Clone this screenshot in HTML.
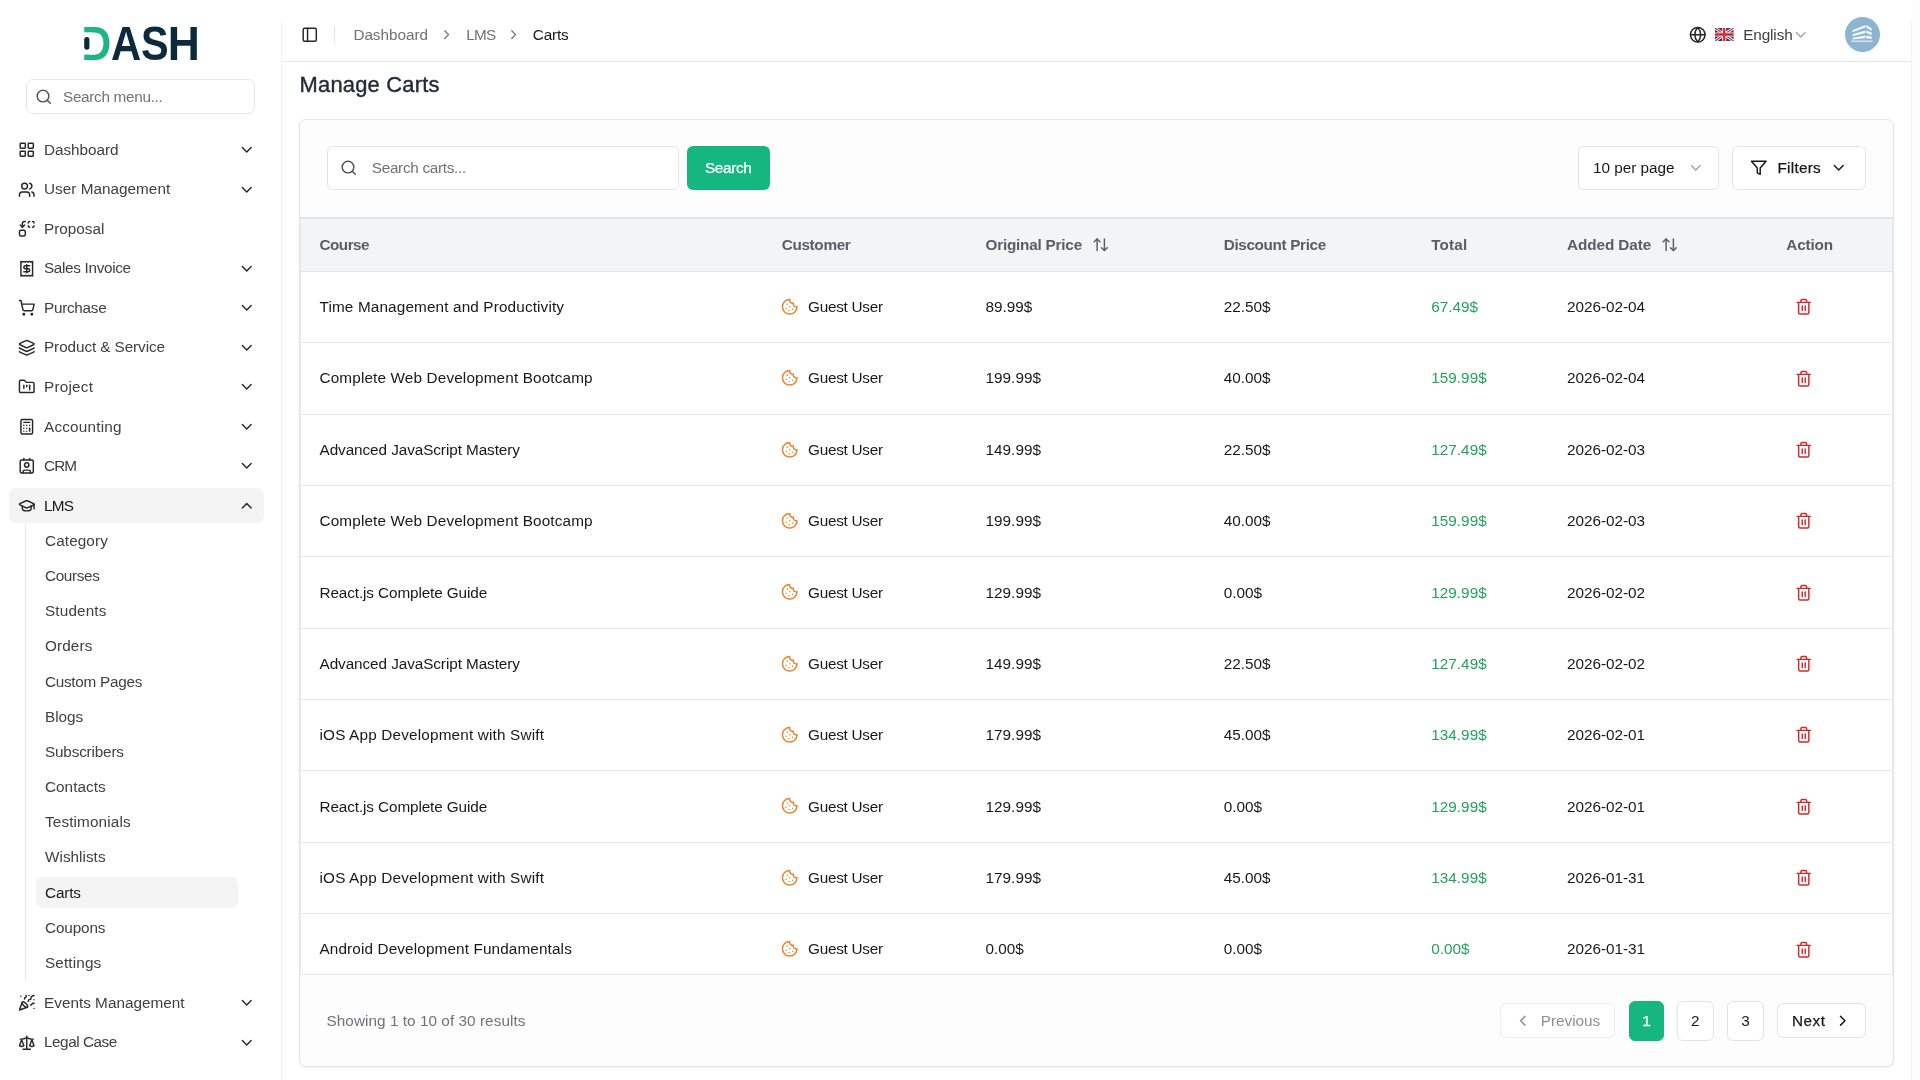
<!DOCTYPE html>
<html lang="en">
<head>
<meta charset="utf-8">
<title>Manage Carts</title>
<style>
*{box-sizing:border-box;margin:0;padding:0}
html,body{width:1920px;height:1080px;overflow:hidden}
body{font-family:"Liberation Sans",sans-serif;font-size:15.3px;color:#1f2937;background:#fdfdfd;position:relative}
svg.i{fill:none;stroke:currentColor;stroke-width:2;stroke-linecap:round;stroke-linejoin:round;display:block}
/* ---------- sidebar ---------- */
#side{position:absolute;left:0;top:0;width:281px;height:1080px;background:#fff;will-change:transform}
#logo{position:absolute;left:80px;top:20px;width:124px;height:46px}
#msearch{position:absolute;left:26px;top:79px;width:229px;height:35px;border:1px solid #e5e5e7;border-radius:7px;background:#fff}
#msearch svg{position:absolute;left:8px;top:8px;width:17.5px;height:17.5px;color:#52525b}
#msearch span{position:absolute;left:36px;top:7px;font-size:15.3px;line-height:19px;color:#71717a;white-space:nowrap}
.mi{position:absolute;left:9px;width:255px;height:35px;border-radius:7px;color:#404042}
.mi svg.ic{position:absolute;left:9.2px;top:8.75px;width:17.5px;height:17.5px;color:#27272a}
.mi .t{position:absolute;left:35px;top:8.6px;font-size:15.3px;white-space:nowrap;line-height:19px}
.mi svg.ch{position:absolute;left:229.1px;top:8.75px;width:17.5px;height:17.5px;color:#27272a}
.mi.act{background:#f4f4f5;color:#18181b}
#subline{position:absolute;left:25px;top:523px;width:1px;height:457px;background:#e5e7eb}
.si{position:absolute;left:36px;width:202px;height:30.6px;border-radius:7px;color:#404042}
.si span{position:absolute;left:9px;top:6.2px;font-size:15.3px;white-space:nowrap;line-height:19px}
.si.act{background:#f4f4f5;color:#18181b}
/* ---------- main ---------- */
#main{position:absolute;left:281px;top:0;width:1631px;height:1100px;background:#fff;will-change:transform;border-left:1px solid transparent;border-right:1px solid transparent}
#main:before,#main:after{content:"";position:absolute;top:20px;width:1px;height:1080px;background:#f3f3f4}
#main:before{left:-1px}
#main:after{right:-1px}
#hdr{position:absolute;left:0;top:0;width:100%;height:62px;border-bottom:1px solid #e7e7e9}
#hdr .tx{line-height:20px}

.abs{position:absolute;white-space:nowrap}
.tx{position:absolute;white-space:nowrap;font-size:15.3px;line-height:20px}
#title{position:absolute;white-space:nowrap;font-size:21.9px;line-height:30px;color:#1f2937;-webkit-text-stroke:.4px #1f2937}
#card{position:absolute;border:1px solid #e4e4e7;border-radius:7px;background:#fdfdfd;box-shadow:0 1px 2px rgba(0,0,0,.06);overflow:hidden}
.box{position:absolute;border:1px solid #e4e4e7;border-radius:5.5px;background:#fff}
#thead{position:absolute;left:0;width:100%;background:#f3f4f6;box-shadow:inset 1px 0 0 #e9eaec,inset -1px 0 0 #e9eaec;border-top:2px solid #e2e3e6;border-bottom:1px solid #e5e7eb}
#thead .tx{font-weight:bold;color:#585d69}
#thead svg{color:#585d69}
#rows{position:absolute;left:0;width:100%;overflow:hidden;background:#fff;border-bottom:1px solid #e5e7eb}
#rows:after{content:"";position:absolute;left:0;top:0;right:0;bottom:0;box-shadow:inset 1px 0 0 #ececee,inset -1px 0 0 #ececee;pointer-events:none}
.r{position:absolute;left:0;width:100%;border-bottom:1px solid #e6e7ea}
.r .tx{color:#18181b}
.r .tx.g{color:#21a35b}
.pg{position:absolute;border:1px solid #e4e4e7;border-radius:6px;background:#fff}

</style>
</head>
<body>
<div id="side">
  <svg id="logo" viewBox="0 0 124 46">
    <g font-family="Liberation Sans, sans-serif" font-weight="bold" font-size="48.3">
      <text x="1.6" y="39.9" textLength="29.7" lengthAdjust="spacingAndGlyphs" fill="#1db584">D</text>
      <text x="31.05" y="39.9" textLength="30.2" lengthAdjust="spacingAndGlyphs" fill="#0b2a3b">A</text>
      <text x="61" y="39.9" textLength="27.7" lengthAdjust="spacingAndGlyphs" fill="#0b2a3b">S</text>
      <text x="87.7" y="39.9" textLength="32.1" lengthAdjust="spacingAndGlyphs" fill="#0b2a3b">H</text>
    </g>
    <rect x="2" y="12.3" width="9.6" height="22.3" fill="#fff"/>
    <rect x="4.2" y="16.9" width="5.2" height="12.8" rx="2.6" fill="#0b2a3b"/>
  </svg>
  <div id="msearch">
    <svg class="i" viewBox="0 0 24 24"><circle cx="11" cy="11" r="8"/><path d="m21 21-4.3-4.3"/></svg>
    <span style="letter-spacing:-0.302px">Search menu...</span>
  </div>
  <div class="mi" style="top:132.30px"><svg class="i ic" viewBox="0 0 24 24" ><rect width="7" height="7" x="3" y="3" rx="1"/><rect width="7" height="7" x="14" y="3" rx="1"/><rect width="7" height="7" x="14" y="14" rx="1"/><rect width="7" height="7" x="3" y="14" rx="1"/></svg><span class="t" style="top:7.70px;letter-spacing:-0.035px">Dashboard</span><svg class="i ch" viewBox="0 0 24 24" ><path d="m6 9 6 6 6-6"/></svg></div>
  <div class="mi" style="top:171.80px"><svg class="i ic" viewBox="0 0 24 24" ><path d="M16 21v-2a4 4 0 0 0-4-4H6a4 4 0 0 0-4 4v2"/><circle cx="9" cy="7" r="4"/><path d="M22 21v-2a4 4 0 0 0-3-3.87"/><path d="M16 3.13a4 4 0 0 1 0 7.75"/></svg><span class="t" style="top:7.20px;letter-spacing:0.025px">User Management</span><svg class="i ch" viewBox="0 0 24 24" ><path d="m6 9 6 6 6-6"/></svg></div>
  <div class="mi" style="top:211.30px"><svg class="i ic" viewBox="0 0 24 24" ><path d="M14 4a2 2 0 0 1 2-2"/><path d="M16 10a2 2 0 0 1-2-2"/><path d="M20 2a2 2 0 0 1 2 2"/><path d="M22 8a2 2 0 0 1-2 2"/><path d="m3 7 3 3 3-3"/><path d="M6 10V5a3 3 0 0 1 3-3h1"/><rect x="2" y="14" width="8" height="8" rx="2"/></svg><span class="t" style="top:7.70px;letter-spacing:-0.01px">Proposal</span></div>
  <div class="mi" style="top:250.80px"><svg class="i ic" viewBox="0 0 24 24" ><path d="M4 2v20l2-1 2 1 2-1 2 1 2-1 2 1 2-1 2 1V2l-2 1-2-1-2 1-2-1-2 1-2-1-2 1Z"/><path d="M16 8h-6a2 2 0 1 0 0 4h4a2 2 0 1 1 0 4H8"/><path d="M12 17.5v-11"/></svg><span class="t" style="top:7.20px;letter-spacing:-0.328px">Sales Invoice</span><svg class="i ch" viewBox="0 0 24 24" ><path d="m6 9 6 6 6-6"/></svg></div>
  <div class="mi" style="top:290.30px"><svg class="i ic" viewBox="0 0 24 24" ><circle cx="8" cy="21" r="1"/><circle cx="19" cy="21" r="1"/><path d="M2.05 2.05h2l2.66 12.42a2 2 0 0 0 2 1.58h9.78a2 2 0 0 0 1.95-1.57l1.65-7.43H5.12"/></svg><span class="t" style="top:7.70px;letter-spacing:-0.27px">Purchase</span><svg class="i ch" viewBox="0 0 24 24" ><path d="m6 9 6 6 6-6"/></svg></div>
  <div class="mi" style="top:329.80px"><svg class="i ic" viewBox="0 0 24 24" ><path d="M12.83 2.18a2 2 0 0 0-1.66 0L2.6 6.08a1 1 0 0 0 0 1.83l8.58 3.91a2 2 0 0 0 1.66 0l8.58-3.9a1 1 0 0 0 0-1.83z"/><path d="M2 12a1 1 0 0 0 .58.91l8.6 3.91a2 2 0 0 0 1.65 0l8.58-3.9A1 1 0 0 0 22 12"/><path d="M2 17a1 1 0 0 0 .58.91l8.6 3.91a2 2 0 0 0 1.65 0l8.58-3.9A1 1 0 0 0 22 17"/></svg><span class="t" style="top:7.20px;letter-spacing:-0.085px">Product &amp; Service</span><svg class="i ch" viewBox="0 0 24 24" ><path d="m6 9 6 6 6-6"/></svg></div>
  <div class="mi" style="top:369.30px"><svg class="i ic" viewBox="0 0 24 24" ><path d="M4 20h16a2 2 0 0 0 2-2V8a2 2 0 0 0-2-2h-7.93a2 2 0 0 1-1.66-.9l-.82-1.2A2 2 0 0 0 7.93 3H4a2 2 0 0 0-2 2v13c0 1.1.9 2 2 2Z"/><path d="M8 10v4"/><path d="M12 10v2"/><path d="M16 10v6"/></svg><span class="t" style="top:7.70px;letter-spacing:0.223px">Project</span><svg class="i ch" viewBox="0 0 24 24" ><path d="m6 9 6 6 6-6"/></svg></div>
  <div class="mi" style="top:408.80px"><svg class="i ic" viewBox="0 0 24 24" ><rect width="16" height="20" x="4" y="2" rx="2"/><line x1="8" x2="16" y1="6" y2="6"/><line x1="16" x2="16" y1="14" y2="18"/><path d="M16 10h.01"/><path d="M12 10h.01"/><path d="M8 10h.01"/><path d="M12 14h.01"/><path d="M8 14h.01"/><path d="M12 18h.01"/><path d="M8 18h.01"/></svg><span class="t" style="top:8.20px;letter-spacing:0.206px">Accounting</span><svg class="i ch" viewBox="0 0 24 24" ><path d="m6 9 6 6 6-6"/></svg></div>
  <div class="mi" style="top:448.30px"><svg class="i ic" viewBox="0 0 24 24" ><path d="M16 2v2"/><path d="M7 22v-2a2 2 0 0 1 2-2h6a2 2 0 0 1 2 2v2"/><path d="M8 2v2"/><circle cx="12" cy="11" r="3"/><rect x="3" y="4" width="18" height="18" rx="2"/></svg><span class="t" style="top:7.70px;letter-spacing:-0.875px">CRM</span><svg class="i ch" viewBox="0 0 24 24" ><path d="m6 9 6 6 6-6"/></svg></div>
  <div class="mi act" style="top:487.80px"><svg class="i ic" viewBox="0 0 24 24" ><path d="M21.42 10.922a1 1 0 0 0-.019-1.838L12.83 5.18a2 2 0 0 0-1.66 0L2.6 9.08a1 1 0 0 0 0 1.832l8.57 3.908a2 2 0 0 0 1.66 0z"/><path d="M22 10v6"/><path d="M6 12.5V16a6 3 0 0 0 12 0v-3.5"/></svg><span class="t" style="top:8.20px;letter-spacing:-0.781px">LMS</span><svg class="i ch" viewBox="0 0 24 24" ><path d="m18 15-6-6-6 6"/></svg></div>
  <div class="mi" style="top:985.10px"><svg class="i ic" viewBox="0 0 24 24" ><path d="M5.8 11.3 2 22l10.7-3.79"/><path d="M4 3h.01"/><path d="M22 8h.01"/><path d="M15 2h.01"/><path d="M22 20h.01"/><path d="m22 2-2.24.75a2.9 2.9 0 0 0-1.96 3.12c.1.86-.57 1.63-1.45 1.63h-.38c-.86 0-1.6.6-1.76 1.44L14 10"/><path d="m22 13-.82-.33c-.86-.34-1.82.2-1.98 1.11c-.11.7-.72 1.22-1.43 1.22H17"/><path d="m11 2 .33.82c.34.86-.2 1.82-1.11 1.98C9.52 4.9 9 5.52 9 6.23V7"/><path d="M11 13c1.93 1.93 2.83 4.17 2 5-.83.83-3.07-.07-5-2-1.93-1.93-2.83-4.17-2-5 .83-.83 3.07.07 5 2Z"/></svg><span class="t" style="top:7.90px;letter-spacing:0.015px">Events Management</span><svg class="i ch" viewBox="0 0 24 24" ><path d="m6 9 6 6 6-6"/></svg></div>
  <div class="mi" style="top:1025.40px"><svg class="i ic" viewBox="0 0 24 24" ><path d="m16 16 3-8 3 8c-.87.65-1.92 1-3 1s-2.13-.35-3-1Z"/><path d="m2 16 3-8 3 8c-.87.65-1.92 1-3 1s-2.13-.35-3-1Z"/><path d="M7 21h10"/><path d="M12 3v18"/><path d="M3 7h2c2 0 5-1 7-2 2 1 5 2 7 2h2"/></svg><span class="t" style="top:6.60px;letter-spacing:-0.464px">Legal Case</span><svg class="i ch" viewBox="0 0 24 24" ><path d="m6 9 6 6 6-6"/></svg></div>
  <div id="subline"></div>
  <div class="si" style="top:525.60px"><span style="top:5.40px;letter-spacing:0.107px">Category</span></div>
  <div class="si" style="top:560.76px"><span style="top:5.24px;letter-spacing:-0.342px">Courses</span></div>
  <div class="si" style="top:595.92px"><span style="top:5.08px;letter-spacing:0.145px">Students</span></div>
  <div class="si" style="top:631.08px"><span style="top:4.92px;letter-spacing:0.122px">Orders</span></div>
  <div class="si" style="top:666.24px"><span style="top:5.76px;letter-spacing:-0.277px">Custom Pages</span></div>
  <div class="si" style="top:701.40px"><span style="top:5.60px;letter-spacing:-0.031px">Blogs</span></div>
  <div class="si" style="top:736.56px"><span style="top:5.44px;letter-spacing:-0.179px">Subscribers</span></div>
  <div class="si" style="top:771.72px"><span style="top:5.28px;letter-spacing:0.035px">Contacts</span></div>
  <div class="si" style="top:806.88px"><span style="top:5.12px;letter-spacing:0.128px">Testimonials</span></div>
  <div class="si" style="top:842.04px"><span style="top:4.96px;letter-spacing:0.024px">Wishlists</span></div>
  <div class="si act" style="top:877.20px"><span style="top:5.80px;letter-spacing:-0.169px">Carts</span></div>
  <div class="si" style="top:912.36px"><span style="top:5.64px;letter-spacing:-0.129px">Coupons</span></div>
  <div class="si" style="top:947.52px"><span style="top:5.48px;letter-spacing:0.137px">Settings</span></div>
</div>
<div id="main">
  <div id="hdr"><svg class="i abs" viewBox="0 0 24 24" style="left:18.95px;top:25.95px;width:17.5px;height:17.5px;color:#27272a;stroke-width:2;"><rect width="18" height="18" x="3" y="3" rx="2"/><path d="M9 3v18"/></svg><div class="abs" style="left:52px;top:26px;width:1px;height:17px;background:#e4e4e7"></div><span class="tx" style="left:71.40px;top:25.00px;letter-spacing:-0.035px;color:#71717a">Dashboard</span><svg class="i abs" viewBox="0 0 24 24" style="left:156.95px;top:27.25px;width:15.3px;height:15.3px;color:#71717a;stroke-width:2;"><path d="m9 18 6-6-6-6"/></svg><span class="tx" style="left:184.30px;top:25.00px;letter-spacing:-0.781px;color:#71717a">LMS</span><svg class="i abs" viewBox="0 0 24 24" style="left:224.05px;top:27.25px;width:15.3px;height:15.3px;color:#71717a;stroke-width:2;"><path d="m9 18 6-6-6-6"/></svg><span class="tx" style="left:250.80px;top:25.00px;letter-spacing:-0.169px;color:#18181b">Carts</span><svg class="i abs" viewBox="0 0 24 24" style="left:1407.05px;top:25.80px;width:17.5px;height:17.5px;color:#27272a;stroke-width:2;"><circle cx="12" cy="12" r="10"/><path d="M12 2a14.5 14.5 0 0 0 0 20 14.5 14.5 0 0 0 0-20"/><path d="M2 12h20"/></svg><svg class="abs" viewBox="0 0 60 40" preserveAspectRatio="none" style="left:1433.3px;top:28px;width:18.5px;height:13px"><rect width="60" height="40" fill="#1f3a8a"/><path d="M0 0 60 40M60 0 0 40" stroke="#fff" stroke-width="9"/><path d="M0 0 60 40M60 0 0 40" stroke="#dc2626" stroke-width="3.5"/><path d="M30 0v40M0 20h60" stroke="#fff" stroke-width="13"/><path d="M30 0v40M0 20h60" stroke="#dc2626" stroke-width="7.5"/></svg><span class="tx" style="left:1461.30px;top:25.00px;letter-spacing:-0.136px;color:#3f3f46">English</span><svg class="i abs" viewBox="0 0 24 24" style="left:1510.15px;top:26.20px;width:17.5px;height:17.5px;color:#a1a1aa;stroke-width:1.8;"><path d="m6 9 6 6 6-6"/></svg><svg class="abs" viewBox="0 0 35 35" style="left:1563px;top:16.8px;width:35px;height:35px"><circle cx="17.5" cy="17.5" r="17.5" fill="#8db4d1"/><g fill="#f3f8fc"><path d="M7.5 13.2 20.3 8l0 2.6-12.8 4.6z"/><path d="M7.5 17.2 20.3 13.4l0 2.6-12.8 3.2z"/><path d="M7.5 20.8 20.3 18.6l0 2.6-12.8 1.4z"/><path d="M21.2 8 26.7 11.6v2.4L21.2 10.6z"/><path d="M21.2 13.4 26.7 15.6v2.4l-5.5-2z"/><path d="M21.2 18.6 26.7 19.6v2.4l-5.5-.8z"/><rect x="6.5" y="23.6" width="21.2" height="1.1"/></g></svg></div>
  <div id="title" style="left:17.60px;top:70.00px;letter-spacing:0.207px">Manage Carts</div>
  <div id="card" style="left:17px;top:119px;width:1594.5px;height:947.5px">
    <div class="box" style="left:27.20px;top:26.00px;width:351.80px;height:43.70px;"><svg class="i abs" viewBox="0 0 24 24" style="left:11.80px;top:12.35px;width:17.5px;height:17.5px;color:#52525b;stroke-width:2;"><circle cx="11" cy="11" r="8"/><path d="m21 21-4.3-4.3"/></svg><span class="tx" style="left:43.60px;top:11.00px;letter-spacing:-0.3px;color:#71717a">Search carts...</span></div>
    <div class="abs" style="left:387px;top:26px;width:83px;height:43.7px;border-radius:6px;background:#15b680"><span class="tx" style="left:18.00px;top:12.00px;letter-spacing:-0.357px;color:#fff;-webkit-text-stroke:0.25px #fff">Search</span></div>
    <div class="box" style="left:1278.00px;top:26.00px;width:140.50px;height:43.70px;"><span class="tx" style="left:14.00px;top:11.00px;letter-spacing:-0.013px;color:#18181b">10 per page</span><svg class="i abs" viewBox="0 0 24 24" style="left:108.00px;top:12.15px;width:17.5px;height:17.5px;color:#a1a1aa;stroke-width:1.8;"><path d="m6 9 6 6 6-6"/></svg></div>
    <div class="box" style="left:1432.30px;top:26.00px;width:133.40px;height:43.70px;"><svg class="i abs" viewBox="0 0 24 24" style="left:16.70px;top:11.85px;width:17.5px;height:17.5px;color:#18181b;stroke-width:2;"><polygon points="22 3 2 3 10 12.46 10 19 14 21 14 12.46 22 3"/></svg><span class="tx" style="left:44.20px;top:11.00px;letter-spacing:0.267px;color:#18181b;-webkit-text-stroke:0.25px #18181b">Filters</span><svg class="i abs" viewBox="0 0 24 24" style="left:96.70px;top:12.15px;width:17.5px;height:17.5px;color:#18181b;stroke-width:2;"><path d="m6 9 6 6 6-6"/></svg></div>
    <div id="thead" style="top:97px;height:55px"><span class="tx" style="left:19.50px;top:16.00px;letter-spacing:-0.533px">Course</span><span class="tx" style="left:481.70px;top:16.00px;letter-spacing:-0.329px">Customer</span><span class="tx" style="left:685.50px;top:16.00px;letter-spacing:-0.216px">Original Price</span><svg class="i abs" viewBox="0 0 24 24" style="left:792.15px;top:17.25px;width:17.5px;height:17.5px;color:#585d69;stroke-width:2;"><path d="m21 16-4 4-4-4"/><path d="M17 20V4"/><path d="m3 8 4-4 4 4"/><path d="M7 4v16"/></svg><span class="tx" style="left:923.70px;top:16.00px;letter-spacing:-0.352px">Discount Price</span><span class="tx" style="left:1131.20px;top:16.00px;letter-spacing:0.159px">Total</span><span class="tx" style="left:1267.00px;top:16.00px;letter-spacing:-0.083px">Added Date</span><svg class="i abs" viewBox="0 0 24 24" style="left:1360.85px;top:17.25px;width:17.5px;height:17.5px;color:#585d69;stroke-width:2;"><path d="m21 16-4 4-4-4"/><path d="M17 20V4"/><path d="m3 8 4-4 4 4"/><path d="M7 4v16"/></svg><span class="tx" style="left:1486.30px;top:16.00px;letter-spacing:-0.17px">Action</span></div>
    <div id="rows" style="top:152px;height:703px">
      <div class="r" style="top:0px;height:71px"><span class="tx" style="left:19.50px;top:25.00px;letter-spacing:0.143px">Time Management and Productivity</span><svg class="i abs" viewBox="0 0 24 24" style="left:481.15px;top:25.95px;width:17.5px;height:17.5px;color:#e8842a;stroke-width:2;"><path d="M12 2a10 10 0 1 0 10 10 4 4 0 0 1-5-5 4 4 0 0 1-5-5"/><path d="M8.5 8.5v.01"/><path d="M16 15.5v.01"/><path d="M12 12v.01"/><path d="M11 17v.01"/><path d="M7 14v.01"/></svg><span class="tx" style="left:508.00px;top:25.00px;letter-spacing:-0.255px">Guest User</span><span class="tx" style="left:685.50px;top:25.00px;letter-spacing:0.018px">89.99$</span><span class="tx" style="left:923.70px;top:25.00px;letter-spacing:0.018px">22.50$</span><span class="tx g" style="left:1131.20px;top:25.00px;letter-spacing:0.018px">67.49$</span><span class="tx" style="left:1267.00px;top:25.00px;letter-spacing:-0.037px">2026-02-04</span><svg class="i abs" viewBox="0 0 24 24" style="left:1495.15px;top:26.25px;width:17.5px;height:17.5px;color:#d02b2b;stroke-width:2;"><path d="M3 6h18"/><path d="M19 6v14c0 1-1 2-2 2H7c-1 0-2-1-2-2V6"/><path d="M8 6V4c0-1 1-2 2-2h4c1 0 2 1 2 2v2"/><line x1="10" x2="10" y1="11" y2="17"/><line x1="14" x2="14" y1="11" y2="17"/></svg></div>
      <div class="r" style="top:71px;height:72px"><span class="tx" style="left:19.50px;top:25.00px;letter-spacing:0.147px">Complete Web Development Bootcamp</span><svg class="i abs" viewBox="0 0 24 24" style="left:481.15px;top:26.45px;width:17.5px;height:17.5px;color:#e8842a;stroke-width:2;"><path d="M12 2a10 10 0 1 0 10 10 4 4 0 0 1-5-5 4 4 0 0 1-5-5"/><path d="M8.5 8.5v.01"/><path d="M16 15.5v.01"/><path d="M12 12v.01"/><path d="M11 17v.01"/><path d="M7 14v.01"/></svg><span class="tx" style="left:508.00px;top:25.00px;letter-spacing:-0.255px">Guest User</span><span class="tx" style="left:685.50px;top:25.00px;letter-spacing:0.033px">199.99$</span><span class="tx" style="left:923.70px;top:25.00px;letter-spacing:0.018px">40.00$</span><span class="tx g" style="left:1131.20px;top:25.00px;letter-spacing:0.033px">159.99$</span><span class="tx" style="left:1267.00px;top:25.00px;letter-spacing:-0.037px">2026-02-04</span><svg class="i abs" viewBox="0 0 24 24" style="left:1495.15px;top:26.75px;width:17.5px;height:17.5px;color:#d02b2b;stroke-width:2;"><path d="M3 6h18"/><path d="M19 6v14c0 1-1 2-2 2H7c-1 0-2-1-2-2V6"/><path d="M8 6V4c0-1 1-2 2-2h4c1 0 2 1 2 2v2"/><line x1="10" x2="10" y1="11" y2="17"/><line x1="14" x2="14" y1="11" y2="17"/></svg></div>
      <div class="r" style="top:143px;height:71px"><span class="tx" style="left:19.50px;top:25.00px;letter-spacing:-0.072px">Advanced JavaScript Mastery</span><svg class="i abs" viewBox="0 0 24 24" style="left:481.15px;top:25.95px;width:17.5px;height:17.5px;color:#e8842a;stroke-width:2;"><path d="M12 2a10 10 0 1 0 10 10 4 4 0 0 1-5-5 4 4 0 0 1-5-5"/><path d="M8.5 8.5v.01"/><path d="M16 15.5v.01"/><path d="M12 12v.01"/><path d="M11 17v.01"/><path d="M7 14v.01"/></svg><span class="tx" style="left:508.00px;top:25.00px;letter-spacing:-0.255px">Guest User</span><span class="tx" style="left:685.50px;top:25.00px;letter-spacing:0.033px">149.99$</span><span class="tx" style="left:923.70px;top:25.00px;letter-spacing:0.018px">22.50$</span><span class="tx g" style="left:1131.20px;top:25.00px;letter-spacing:0.033px">127.49$</span><span class="tx" style="left:1267.00px;top:25.00px;letter-spacing:-0.037px">2026-02-03</span><svg class="i abs" viewBox="0 0 24 24" style="left:1495.15px;top:26.25px;width:17.5px;height:17.5px;color:#d02b2b;stroke-width:2;"><path d="M3 6h18"/><path d="M19 6v14c0 1-1 2-2 2H7c-1 0-2-1-2-2V6"/><path d="M8 6V4c0-1 1-2 2-2h4c1 0 2 1 2 2v2"/><line x1="10" x2="10" y1="11" y2="17"/><line x1="14" x2="14" y1="11" y2="17"/></svg></div>
      <div class="r" style="top:214px;height:71px"><span class="tx" style="left:19.50px;top:25.00px;letter-spacing:0.147px">Complete Web Development Bootcamp</span><svg class="i abs" viewBox="0 0 24 24" style="left:481.15px;top:25.95px;width:17.5px;height:17.5px;color:#e8842a;stroke-width:2;"><path d="M12 2a10 10 0 1 0 10 10 4 4 0 0 1-5-5 4 4 0 0 1-5-5"/><path d="M8.5 8.5v.01"/><path d="M16 15.5v.01"/><path d="M12 12v.01"/><path d="M11 17v.01"/><path d="M7 14v.01"/></svg><span class="tx" style="left:508.00px;top:25.00px;letter-spacing:-0.255px">Guest User</span><span class="tx" style="left:685.50px;top:25.00px;letter-spacing:0.033px">199.99$</span><span class="tx" style="left:923.70px;top:25.00px;letter-spacing:0.018px">40.00$</span><span class="tx g" style="left:1131.20px;top:25.00px;letter-spacing:0.033px">159.99$</span><span class="tx" style="left:1267.00px;top:25.00px;letter-spacing:-0.037px">2026-02-03</span><svg class="i abs" viewBox="0 0 24 24" style="left:1495.15px;top:26.25px;width:17.5px;height:17.5px;color:#d02b2b;stroke-width:2;"><path d="M3 6h18"/><path d="M19 6v14c0 1-1 2-2 2H7c-1 0-2-1-2-2V6"/><path d="M8 6V4c0-1 1-2 2-2h4c1 0 2 1 2 2v2"/><line x1="10" x2="10" y1="11" y2="17"/><line x1="14" x2="14" y1="11" y2="17"/></svg></div>
      <div class="r" style="top:285px;height:72px"><span class="tx" style="left:19.50px;top:26.00px;letter-spacing:-0.107px">React.js Complete Guide</span><svg class="i abs" viewBox="0 0 24 24" style="left:481.15px;top:26.45px;width:17.5px;height:17.5px;color:#e8842a;stroke-width:2;"><path d="M12 2a10 10 0 1 0 10 10 4 4 0 0 1-5-5 4 4 0 0 1-5-5"/><path d="M8.5 8.5v.01"/><path d="M16 15.5v.01"/><path d="M12 12v.01"/><path d="M11 17v.01"/><path d="M7 14v.01"/></svg><span class="tx" style="left:508.00px;top:26.00px;letter-spacing:-0.255px">Guest User</span><span class="tx" style="left:685.50px;top:26.00px;letter-spacing:0.033px">129.99$</span><span class="tx" style="left:923.70px;top:26.00px;letter-spacing:0px">0.00$</span><span class="tx g" style="left:1131.20px;top:26.00px;letter-spacing:0.033px">129.99$</span><span class="tx" style="left:1267.00px;top:26.00px;letter-spacing:-0.037px">2026-02-02</span><svg class="i abs" viewBox="0 0 24 24" style="left:1495.15px;top:26.75px;width:17.5px;height:17.5px;color:#d02b2b;stroke-width:2;"><path d="M3 6h18"/><path d="M19 6v14c0 1-1 2-2 2H7c-1 0-2-1-2-2V6"/><path d="M8 6V4c0-1 1-2 2-2h4c1 0 2 1 2 2v2"/><line x1="10" x2="10" y1="11" y2="17"/><line x1="14" x2="14" y1="11" y2="17"/></svg></div>
      <div class="r" style="top:357px;height:71px"><span class="tx" style="left:19.50px;top:25.00px;letter-spacing:-0.072px">Advanced JavaScript Mastery</span><svg class="i abs" viewBox="0 0 24 24" style="left:481.15px;top:25.95px;width:17.5px;height:17.5px;color:#e8842a;stroke-width:2;"><path d="M12 2a10 10 0 1 0 10 10 4 4 0 0 1-5-5 4 4 0 0 1-5-5"/><path d="M8.5 8.5v.01"/><path d="M16 15.5v.01"/><path d="M12 12v.01"/><path d="M11 17v.01"/><path d="M7 14v.01"/></svg><span class="tx" style="left:508.00px;top:25.00px;letter-spacing:-0.255px">Guest User</span><span class="tx" style="left:685.50px;top:25.00px;letter-spacing:0.033px">149.99$</span><span class="tx" style="left:923.70px;top:25.00px;letter-spacing:0.018px">22.50$</span><span class="tx g" style="left:1131.20px;top:25.00px;letter-spacing:0.033px">127.49$</span><span class="tx" style="left:1267.00px;top:25.00px;letter-spacing:-0.037px">2026-02-02</span><svg class="i abs" viewBox="0 0 24 24" style="left:1495.15px;top:26.25px;width:17.5px;height:17.5px;color:#d02b2b;stroke-width:2;"><path d="M3 6h18"/><path d="M19 6v14c0 1-1 2-2 2H7c-1 0-2-1-2-2V6"/><path d="M8 6V4c0-1 1-2 2-2h4c1 0 2 1 2 2v2"/><line x1="10" x2="10" y1="11" y2="17"/><line x1="14" x2="14" y1="11" y2="17"/></svg></div>
      <div class="r" style="top:428px;height:71px"><span class="tx" style="left:19.50px;top:25.00px;letter-spacing:0.176px">iOS App Development with Swift</span><svg class="i abs" viewBox="0 0 24 24" style="left:481.15px;top:25.95px;width:17.5px;height:17.5px;color:#e8842a;stroke-width:2;"><path d="M12 2a10 10 0 1 0 10 10 4 4 0 0 1-5-5 4 4 0 0 1-5-5"/><path d="M8.5 8.5v.01"/><path d="M16 15.5v.01"/><path d="M12 12v.01"/><path d="M11 17v.01"/><path d="M7 14v.01"/></svg><span class="tx" style="left:508.00px;top:25.00px;letter-spacing:-0.255px">Guest User</span><span class="tx" style="left:685.50px;top:25.00px;letter-spacing:0.033px">179.99$</span><span class="tx" style="left:923.70px;top:25.00px;letter-spacing:0.018px">45.00$</span><span class="tx g" style="left:1131.20px;top:25.00px;letter-spacing:0.033px">134.99$</span><span class="tx" style="left:1267.00px;top:25.00px;letter-spacing:-0.037px">2026-02-01</span><svg class="i abs" viewBox="0 0 24 24" style="left:1495.15px;top:26.25px;width:17.5px;height:17.5px;color:#d02b2b;stroke-width:2;"><path d="M3 6h18"/><path d="M19 6v14c0 1-1 2-2 2H7c-1 0-2-1-2-2V6"/><path d="M8 6V4c0-1 1-2 2-2h4c1 0 2 1 2 2v2"/><line x1="10" x2="10" y1="11" y2="17"/><line x1="14" x2="14" y1="11" y2="17"/></svg></div>
      <div class="r" style="top:499px;height:72px"><span class="tx" style="left:19.50px;top:26.00px;letter-spacing:-0.107px">React.js Complete Guide</span><svg class="i abs" viewBox="0 0 24 24" style="left:481.15px;top:26.45px;width:17.5px;height:17.5px;color:#e8842a;stroke-width:2;"><path d="M12 2a10 10 0 1 0 10 10 4 4 0 0 1-5-5 4 4 0 0 1-5-5"/><path d="M8.5 8.5v.01"/><path d="M16 15.5v.01"/><path d="M12 12v.01"/><path d="M11 17v.01"/><path d="M7 14v.01"/></svg><span class="tx" style="left:508.00px;top:26.00px;letter-spacing:-0.255px">Guest User</span><span class="tx" style="left:685.50px;top:26.00px;letter-spacing:0.033px">129.99$</span><span class="tx" style="left:923.70px;top:26.00px;letter-spacing:0px">0.00$</span><span class="tx g" style="left:1131.20px;top:26.00px;letter-spacing:0.033px">129.99$</span><span class="tx" style="left:1267.00px;top:26.00px;letter-spacing:-0.037px">2026-02-01</span><svg class="i abs" viewBox="0 0 24 24" style="left:1495.15px;top:26.75px;width:17.5px;height:17.5px;color:#d02b2b;stroke-width:2;"><path d="M3 6h18"/><path d="M19 6v14c0 1-1 2-2 2H7c-1 0-2-1-2-2V6"/><path d="M8 6V4c0-1 1-2 2-2h4c1 0 2 1 2 2v2"/><line x1="10" x2="10" y1="11" y2="17"/><line x1="14" x2="14" y1="11" y2="17"/></svg></div>
      <div class="r" style="top:571px;height:71px"><span class="tx" style="left:19.50px;top:25.00px;letter-spacing:0.176px">iOS App Development with Swift</span><svg class="i abs" viewBox="0 0 24 24" style="left:481.15px;top:25.95px;width:17.5px;height:17.5px;color:#e8842a;stroke-width:2;"><path d="M12 2a10 10 0 1 0 10 10 4 4 0 0 1-5-5 4 4 0 0 1-5-5"/><path d="M8.5 8.5v.01"/><path d="M16 15.5v.01"/><path d="M12 12v.01"/><path d="M11 17v.01"/><path d="M7 14v.01"/></svg><span class="tx" style="left:508.00px;top:25.00px;letter-spacing:-0.255px">Guest User</span><span class="tx" style="left:685.50px;top:25.00px;letter-spacing:0.033px">179.99$</span><span class="tx" style="left:923.70px;top:25.00px;letter-spacing:0.018px">45.00$</span><span class="tx g" style="left:1131.20px;top:25.00px;letter-spacing:0.033px">134.99$</span><span class="tx" style="left:1267.00px;top:25.00px;letter-spacing:-0.037px">2026-01-31</span><svg class="i abs" viewBox="0 0 24 24" style="left:1495.15px;top:26.25px;width:17.5px;height:17.5px;color:#d02b2b;stroke-width:2;"><path d="M3 6h18"/><path d="M19 6v14c0 1-1 2-2 2H7c-1 0-2-1-2-2V6"/><path d="M8 6V4c0-1 1-2 2-2h4c1 0 2 1 2 2v2"/><line x1="10" x2="10" y1="11" y2="17"/><line x1="14" x2="14" y1="11" y2="17"/></svg></div>
      <div class="r" style="top:642px;height:72px"><span class="tx" style="left:19.50px;top:25.00px;letter-spacing:0.129px">Android Development Fundamentals</span><svg class="i abs" viewBox="0 0 24 24" style="left:481.15px;top:26.45px;width:17.5px;height:17.5px;color:#e8842a;stroke-width:2;"><path d="M12 2a10 10 0 1 0 10 10 4 4 0 0 1-5-5 4 4 0 0 1-5-5"/><path d="M8.5 8.5v.01"/><path d="M16 15.5v.01"/><path d="M12 12v.01"/><path d="M11 17v.01"/><path d="M7 14v.01"/></svg><span class="tx" style="left:508.00px;top:25.00px;letter-spacing:-0.255px">Guest User</span><span class="tx" style="left:685.50px;top:25.00px;letter-spacing:0px">0.00$</span><span class="tx" style="left:923.70px;top:25.00px;letter-spacing:0px">0.00$</span><span class="tx g" style="left:1131.20px;top:25.00px;letter-spacing:0px">0.00$</span><span class="tx" style="left:1267.00px;top:25.00px;letter-spacing:-0.037px">2026-01-31</span><svg class="i abs" viewBox="0 0 24 24" style="left:1495.15px;top:26.75px;width:17.5px;height:17.5px;color:#d02b2b;stroke-width:2;"><path d="M3 6h18"/><path d="M19 6v14c0 1-1 2-2 2H7c-1 0-2-1-2-2V6"/><path d="M8 6V4c0-1 1-2 2-2h4c1 0 2 1 2 2v2"/><line x1="10" x2="10" y1="11" y2="17"/><line x1="14" x2="14" y1="11" y2="17"/></svg></div>
    </div>
    <span class="tx" style="left:26.50px;top:891.00px;letter-spacing:0.056px;color:#71717a">Showing 1 to 10 of 30 results</span>
    <div class="pg" style="left:1200.30px;top:883.00px;width:114.40px;height:34.70px;border-color:#ececee"><svg class="i abs" viewBox="0 0 24 24" style="left:12.85px;top:7.95px;width:17.5px;height:17.5px;color:#8e8e96;stroke-width:2;"><path d="m15 18-6-6 6-6"/></svg><span class="tx" style="left:39.40px;top:7.00px;letter-spacing:0.002px;color:#8e8e96">Previous</span></div>
    <div class="pg" style="left:1329.00px;top:881.20px;width:35.20px;height:39.60px;background:#15b680;border-color:#15b680"><span class="tx" style="left:12.20px;top:8.80px;letter-spacing:-0.005px;color:#fff;-webkit-text-stroke:0.25px #fff">1</span></div><div class="pg" style="left:1377.00px;top:881.20px;width:36.70px;height:39.60px;"><span class="tx" style="left:13.00px;top:8.80px;letter-spacing:0.125px;color:#18181b">2</span></div><div class="pg" style="left:1427.00px;top:881.20px;width:36.70px;height:39.60px;"><span class="tx" style="left:13.20px;top:8.80px;letter-spacing:0.125px;color:#18181b">3</span></div>
    <div class="pg" style="left:1477.00px;top:883.00px;width:88.70px;height:34.70px;"><span class="tx" style="left:14.00px;top:7.00px;letter-spacing:0.505px;color:#18181b;-webkit-text-stroke:0.25px #18181b">Next</span><svg class="i abs" viewBox="0 0 24 24" style="left:56.00px;top:7.95px;width:17.5px;height:17.5px;color:#18181b;stroke-width:2;"><path d="m9 18 6-6-6-6"/></svg></div>
  </div>
</div>
</body>
</html>
